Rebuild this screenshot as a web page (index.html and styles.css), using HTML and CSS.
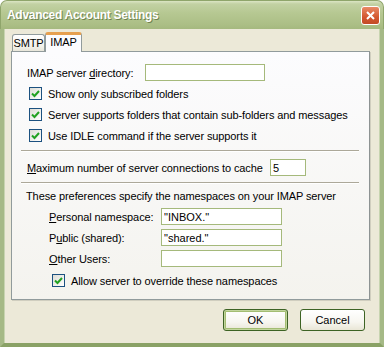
FILE: index.html
```html
<!DOCTYPE html>
<html>
<head>
  <title>Advanced Account Settings</title>
  <link rel="stylesheet" href="styles.css">
</head>
<body>
  <div class="window">
    <div class="titlebar">
      <span class="title">Advanced Account Settings</span>
      <span class="close-btn">
        <svg width="9" height="9" viewBox="0 0 9 9"><path d="M1 1 L8 8 M8 1 L1 8" stroke="#fff" stroke-width="2"/></svg>
      </span>
    </div>
    <div class="frame">
      <div class="tabs">
        <div class="tab">SMTP</div>
        <div class="tab selected">IMAP</div>
      </div>
      <div class="panel">
        <div class="row first">
          <label class="label dir-label">IMAP server <u>d</u>irectory:</label>
          <input type="text" class="field dir-field">
        </div>
        <div class="check-row">
          <span class="checkbox"><svg width="9" height="9" viewBox="0 0 9 9"><path d="M1 4.5 L3.5 7 L8 2" fill="none" stroke="#21a121" stroke-width="2"/></svg></span>
          Show only subscribed folders
        </div>
        <div class="check-row">
          <span class="checkbox"><svg width="9" height="9" viewBox="0 0 9 9"><path d="M1 4.5 L3.5 7 L8 2" fill="none" stroke="#21a121" stroke-width="2"/></svg></span>
          Server supports folders that contain sub-folders and messages
        </div>
        <div class="check-row">
          <span class="checkbox"><svg width="9" height="9" viewBox="0 0 9 9"><path d="M1 4.5 L3.5 7 L8 2" fill="none" stroke="#21a121" stroke-width="2"/></svg></span>
          Use IDLE command if the server supports it
        </div>
        <div class="separator sep-one"></div>
        <div class="row max-row">
          <label class="label max-label"><u>M</u>aximum number of server connections to cache</label>
          <input type="text" class="field max-field" value="5">
        </div>
        <div class="separator sep-two"></div>
        <div class="note">These preferences specify the namespaces on your IMAP server</div>
        <div class="row ns-row">
          <label class="label ns-label"><u>P</u>ersonal namespace:</label>
          <input type="text" class="field ns-field" value="&quot;INBOX.&quot;">
        </div>
        <div class="row ns-row">
          <label class="label ns-label">P<u>u</u>blic (shared):</label>
          <input type="text" class="field ns-field" value="&quot;shared.&quot;">
        </div>
        <div class="row ns-row">
          <label class="label ns-label"><u>O</u>ther Users:</label>
          <input type="text" class="field ns-field">
        </div>
        <div class="check-row override">
          <span class="checkbox"><svg width="9" height="9" viewBox="0 0 9 9"><path d="M1 4.5 L3.5 7 L8 2" fill="none" stroke="#21a121" stroke-width="2"/></svg></span>
          Allow server to override these namespaces
        </div>
      </div>
      <div class="buttons">
        <button type="button" class="btn default">OK</button>
        <button type="button" class="btn">Cancel</button>
      </div>
    </div>
  </div>
</body>
</html>
```

FILE: styles.css
```css
body {
  margin: 0;
  font-family: "Liberation Sans", Arial, sans-serif;
  font-size: 11px;
  letter-spacing: -0.1px;
  color: #000;
}

.window {
  width: 384px;
  height: 347px;
  display: flex;
  flex-direction: column;
}

.titlebar {
  height: 29px;
  box-sizing: border-box;
  border-radius: 7px 7px 0 0;
  border: 1px solid #8fa56b;
  border-bottom: none;
  background: linear-gradient(to bottom, #dbe5c4 0px, #c2d1a3 3px, #b6c892 12px, #abbe85 24px, #a3b77d 29px);
  display: flex;
  align-items: center;
  justify-content: space-between;
  padding: 0 3px 0 6px;
}

.title {
  color: #fff;
  font-weight: bold;
  font-size: 12px;
  letter-spacing: -0.3px;
  text-shadow: 1px 1px 0 #6f8350;
}

.close-btn {
  width: 19px;
  height: 19px;
  box-sizing: border-box;
  border: 1px solid #fff;
  border-radius: 3px;
  background: linear-gradient(to bottom, #e88a66, #d4572f 60%, #c24a26);
  display: flex;
  align-items: center;
  justify-content: center;
  margin-top: 1px;
}

.frame {
  flex: 1;
  background: #ece9d8;
  border-left: 4px solid #a5b986;
  border-right: 4px solid #a5b986;
  border-bottom: 4px solid #8aa266;
  box-shadow: inset 1px 0 0 #c7d4b0, inset -1px 0 0 #c7d4b0;
  padding: 3px 0 0 7px;
}

.tabs {
  display: flex;
  align-items: flex-end;
  height: 19px;
  padding-left: 1px;
}

.tab {
  height: 17px;
  box-sizing: border-box;
  border: 1px solid #919b9c;
  border-bottom: none;
  border-radius: 3px 3px 0 0;
  background: linear-gradient(to bottom, #fff, #f3f2ea 70%, #e8e6da);
  padding-top: 2px;
  width: 33px;
  text-align: center;
  position: relative;
}

.tab.selected {
  height: 20px;
  width: 37px;
  margin-bottom: -1px;
  background: #fcfcfe;
  border-top: 3px solid #e6a050;
  padding-top: 1px;
  z-index: 1;
}

.panel {
  width: 359px;
  height: 249px;
  box-sizing: border-box;
  border: 1px solid #919b9c;
  border-right-color: #8d9393;
  box-shadow: 1px 1px 0 #d0cebf;
  background: linear-gradient(to bottom, #fcfcfe, #f4f3ee);
  padding: 12px 10px 0 10px;
}

.row {
  display: flex;
  align-items: center;
  height: 17px;
  padding-left: 5px;
}

.label {
  flex-shrink: 0;
}

.dir-label {
  width: 118px;
}

.max-label {
  width: 243px;
}

.ns-label {
  width: 112px;
}

.field {
  height: 17px;
  box-sizing: border-box;
  border: 1px solid #a5b97b;
  background: #fff;
  font-family: inherit;
  font-size: 11px;
  padding: 0 2px;
  margin: 0;
}

.dir-field {
  width: 120px;
}

.max-field {
  width: 36px;
}

.ns-field {
  width: 121px;
}

.check-row {
  display: flex;
  align-items: center;
  height: 21px;
  padding-left: 7px;
}

.row.first + .check-row {
  margin-top: 2px;
}

.checkbox {
  width: 13px;
  height: 13px;
  box-sizing: border-box;
  border: 1px solid #1c5180;
  background: linear-gradient(135deg, #dcdcd5, #fff);
  display: flex;
  align-items: center;
  justify-content: center;
  margin-right: 6px;
}

.separator {
  height: 1px;
  background: #aca899;
  border-bottom: 1px solid #fff;
  margin-left: -1px;
}

.sep-one {
  margin-top: 4px;
}

.max-row {
  margin-top: 7px;
}

.sep-two {
  margin-top: 6px;
}

.note {
  margin-top: 4px;
  height: 16px;
  line-height: 16px;
  padding-left: 4px;
}

.ns-row {
  margin-top: 4px;
  padding-left: 27px;
}

.override {
  margin-top: 3px;
  padding-left: 30px;
}

.buttons {
  display: flex;
  justify-content: flex-end;
  gap: 12px;
  margin-top: 9px;
  padding-right: 15px;
}

.btn {
  width: 65px;
  height: 22px;
  box-sizing: border-box;
  border: 1px solid #3d6324;
  border-radius: 3px;
  background: linear-gradient(to bottom, #fff, #f7f6f0 60%, #e9e6d6);
  font-family: inherit;
  font-size: 11px;
  color: #000;
  padding: 0;
}

.btn.default {
  box-shadow: inset 0 0 0 1px #c2d59d, inset 0 0 0 2px #a3bd72;
}
```
